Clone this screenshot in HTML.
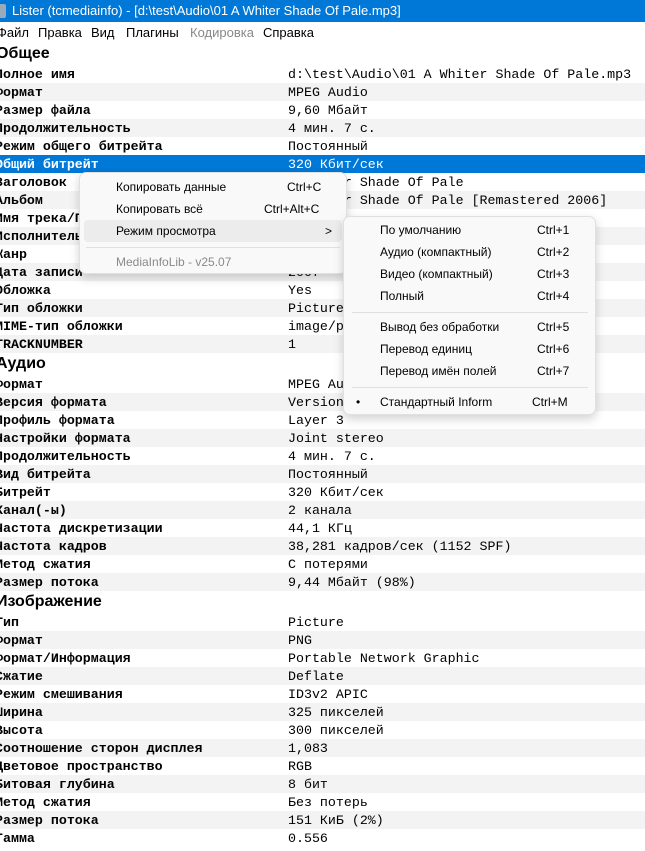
<!DOCTYPE html>
<html><head><meta charset="utf-8"><style>
*{margin:0;padding:0;box-sizing:border-box}
body{width:645px;height:851px;overflow:hidden;background:#fff;position:relative;font-family:"Liberation Sans","DejaVu Sans",sans-serif}
#title{position:absolute;left:0;top:0;width:645px;height:22px;background:#0078d7;color:#fff;font-size:13px;line-height:22px;padding-left:12px;white-space:nowrap}
#title .ic{position:absolute;left:-4px;top:4px;width:10px;height:14px;background:#9ab;border-radius:2px}
#menu{position:absolute;left:0;top:22px;width:645px;height:21px;font-size:13px;line-height:22px;white-space:nowrap}
#menu span{position:absolute;top:0}
.r{position:absolute;left:0;width:645px;height:18px;font-family:"Liberation Mono",monospace;font-size:13.3px;line-height:19px;white-space:nowrap;color:#000}
.r.g{background:#f3f3f3}
.r.s{background:#0078d7;color:#fff}
.r .l{position:absolute;left:-5px;font-weight:bold}
.r .v{position:absolute;left:288px}
.h{position:absolute;left:-4px;font-family:"Liberation Sans",sans-serif;font-weight:bold;font-size:16px;line-height:22px;height:22px}
.m{position:absolute;background:#f9f9f9;border:1px solid #e0e0e0;border-radius:7px;box-shadow:0 4px 10px rgba(0,0,0,.18);font-size:12px;color:#000}
.m .i{position:absolute;height:22px;line-height:22px;white-space:nowrap}
.m .k{position:absolute;height:22px;line-height:22px;white-space:nowrap}
.m .sep{position:absolute;height:1px;background:#e0e0e0}
</style></head><body>
<div id="title"><span class="ic"></span>Lister (tcmediainfo) - [d:\test\Audio\01 A Whiter Shade Of Pale.mp3]</div>
<div id="menu"><span style="left:-3px">Файл</span><span style="left:38px">Правка</span><span style="left:91px">Вид</span><span style="left:126px">Плагины</span><span style="left:190px;color:#888">Кодировка</span><span style="left:263px">Справка</span></div>
<div class="h" style="top:43px">Общее</div>
<div class="r" style="top:65px"><span class="l">Полное имя</span><span class="v">d:\test\Audio\01 A Whiter Shade Of Pale.mp3</span></div>
<div class="r g" style="top:83px"><span class="l">Формат</span><span class="v">MPEG Audio</span></div>
<div class="r" style="top:101px"><span class="l">Размер файла</span><span class="v">9,60 Мбайт</span></div>
<div class="r g" style="top:119px"><span class="l">Продолжительность</span><span class="v">4 мин. 7 с.</span></div>
<div class="r" style="top:137px"><span class="l">Режим общего битрейта</span><span class="v">Постоянный</span></div>
<div class="r s" style="top:155px"><span class="l">Общий битрейт</span><span class="v">320 Кбит/сек</span></div>
<div class="r" style="top:173px"><span class="l">Заголовок</span><span class="v">A Whiter Shade Of Pale</span></div>
<div class="r g" style="top:191px"><span class="l">Альбом</span><span class="v">A Whiter Shade Of Pale [Remastered 2006]</span></div>
<div class="r" style="top:209px"><span class="l">Имя трека/Позиция</span><span class="v">1</span></div>
<div class="r g" style="top:227px"><span class="l">Исполнитель</span><span class="v">Procol Harum</span></div>
<div class="r" style="top:245px"><span class="l">Жанр</span><span class="v">Rock</span></div>
<div class="r g" style="top:263px"><span class="l">Дата записи</span><span class="v">2007</span></div>
<div class="r" style="top:281px"><span class="l">Обложка</span><span class="v">Yes</span></div>
<div class="r g" style="top:299px"><span class="l">Тип обложки</span><span class="v">Picture</span></div>
<div class="r" style="top:317px"><span class="l">MIME-тип обложки</span><span class="v">image/png</span></div>
<div class="r g" style="top:335px"><span class="l">TRACKNUMBER</span><span class="v">1</span></div>
<div class="h" style="top:353px">Аудио</div>
<div class="r" style="top:375px"><span class="l">Формат</span><span class="v">MPEG Audio</span></div>
<div class="r g" style="top:393px"><span class="l">Версия формата</span><span class="v">Version 1</span></div>
<div class="r" style="top:411px"><span class="l">Профиль формата</span><span class="v">Layer 3</span></div>
<div class="r g" style="top:429px"><span class="l">Настройки формата</span><span class="v">Joint stereo</span></div>
<div class="r" style="top:447px"><span class="l">Продолжительность</span><span class="v">4 мин. 7 с.</span></div>
<div class="r g" style="top:465px"><span class="l">Вид битрейта</span><span class="v">Постоянный</span></div>
<div class="r" style="top:483px"><span class="l">Битрейт</span><span class="v">320 Кбит/сек</span></div>
<div class="r g" style="top:501px"><span class="l">Канал(-ы)</span><span class="v">2 канала</span></div>
<div class="r" style="top:519px"><span class="l">Частота дискретизации</span><span class="v">44,1 КГц</span></div>
<div class="r g" style="top:537px"><span class="l">Частота кадров</span><span class="v">38,281 кадров/сек (1152 SPF)</span></div>
<div class="r" style="top:555px"><span class="l">Метод сжатия</span><span class="v">С потерями</span></div>
<div class="r g" style="top:573px"><span class="l">Размер потока</span><span class="v">9,44 Мбайт (98%)</span></div>
<div class="h" style="top:591px">Изображение</div>
<div class="r" style="top:613px"><span class="l">Тип</span><span class="v">Picture</span></div>
<div class="r g" style="top:631px"><span class="l">Формат</span><span class="v">PNG</span></div>
<div class="r" style="top:649px"><span class="l">Формат/Информация</span><span class="v">Portable Network Graphic</span></div>
<div class="r g" style="top:667px"><span class="l">Сжатие</span><span class="v">Deflate</span></div>
<div class="r" style="top:685px"><span class="l">Режим смешивания</span><span class="v">ID3v2 APIC</span></div>
<div class="r g" style="top:703px"><span class="l">Ширина</span><span class="v">325 пикселей</span></div>
<div class="r" style="top:721px"><span class="l">Высота</span><span class="v">300 пикселей</span></div>
<div class="r g" style="top:739px"><span class="l">Соотношение сторон дисплея</span><span class="v">1,083</span></div>
<div class="r" style="top:757px"><span class="l">Цветовое пространство</span><span class="v">RGB</span></div>
<div class="r g" style="top:775px"><span class="l">Битовая глубина</span><span class="v">8 бит</span></div>
<div class="r" style="top:793px"><span class="l">Метод сжатия</span><span class="v">Без потерь</span></div>
<div class="r g" style="top:811px"><span class="l">Размер потока</span><span class="v">151 КиБ (2%)</span></div>
<div class="r" style="top:829px"><span class="l">Гамма</span><span class="v">0.556</span></div>

<div class="m" style="left:79px;top:172px;width:268px;height:102px">
<div class="i" style="left:36px;top:3px">Копировать данные</div><div class="k" style="left:207px;top:3px">Ctrl+C</div>
<div class="i" style="left:36px;top:25px">Копировать всё</div><div class="k" style="left:184px;top:25px">Ctrl+Alt+C</div>
<div style="position:absolute;left:4px;top:47px;width:258px;height:22px;background:#ececec;border-radius:4px"></div>
<div class="i" style="left:36px;top:47px">Режим просмотра</div><div class="k" style="left:245px;top:47px">&gt;</div>
<div class="sep" style="left:6px;top:74px;width:254px"></div>
<div class="i" style="left:36px;top:78px;color:#8a8a8a">MediaInfoLib - v25.07</div>
</div>

<div class="m" style="left:343px;top:216px;width:253px;height:199px">
<div class="i" style="left:36px;top:2px">По умолчанию</div><div class="k" style="left:193px;top:2px">Ctrl+1</div>
<div class="i" style="left:36px;top:24px">Аудио (компактный)</div><div class="k" style="left:193px;top:24px">Ctrl+2</div>
<div class="i" style="left:36px;top:46px">Видео (компактный)</div><div class="k" style="left:193px;top:46px">Ctrl+3</div>
<div class="i" style="left:36px;top:68px">Полный</div><div class="k" style="left:193px;top:68px">Ctrl+4</div>
<div class="sep" style="left:8px;top:95px;width:236px"></div>
<div class="i" style="left:36px;top:99px">Вывод без обработки</div><div class="k" style="left:193px;top:99px">Ctrl+5</div>
<div class="i" style="left:36px;top:121px">Перевод единиц</div><div class="k" style="left:193px;top:121px">Ctrl+6</div>
<div class="i" style="left:36px;top:143px">Перевод имён полей</div><div class="k" style="left:193px;top:143px">Ctrl+7</div>
<div class="sep" style="left:8px;top:170px;width:236px"></div>
<div class="i" style="left:12px;top:174px">•</div>
<div class="i" style="left:36px;top:174px">Стандартный Inform</div><div class="k" style="left:188px;top:174px">Ctrl+M</div>
</div>
</body></html>
